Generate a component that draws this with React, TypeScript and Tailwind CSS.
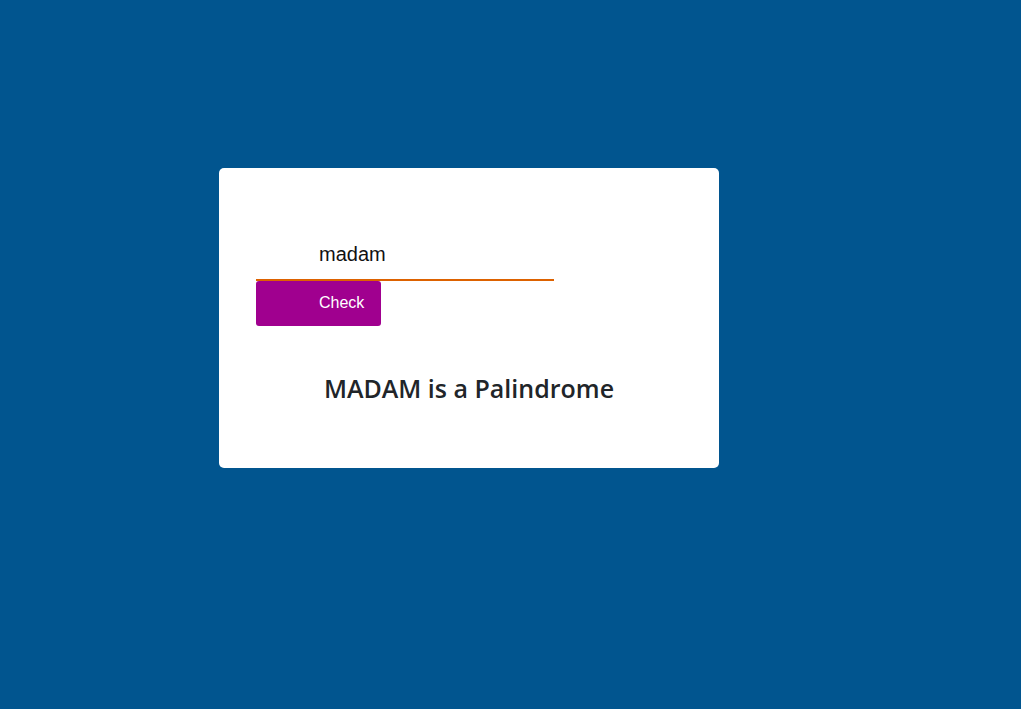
export default function App() {
  return (
    <div className="min-h-screen w-full bg-[#01558f] pt-[168px] pl-[219px]" style={{ minHeight: 709 }}>
      <div className="w-[500px] h-[300px] bg-white rounded-[5px] pt-[67px] pl-[37px] flex flex-col">
        <input
          defaultValue="madam"
          className="w-[298px] h-[46px] pl-[63px] pb-[6px] border-0 border-b-2 border-[#dd6200] outline-none bg-transparent text-[20px] text-[#111] font-['Liberation_Sans',Arial,sans-serif]"
        />
        <button className="w-[125px] h-[45px] bg-[#a0008f] text-white text-[16px] rounded-[3px] text-left pl-[63px] pb-[2px] font-['Liberation_Sans',Arial,sans-serif]">
          Check
        </button>
        <div className="mt-[46px] -ml-[37px] w-[500px] text-center text-[25px] leading-[32px] font-semibold text-[#212529] font-['Open_Sans',sans-serif]">
          MADAM is a Palindrome
        </div>
      </div>
    </div>
  );
}
